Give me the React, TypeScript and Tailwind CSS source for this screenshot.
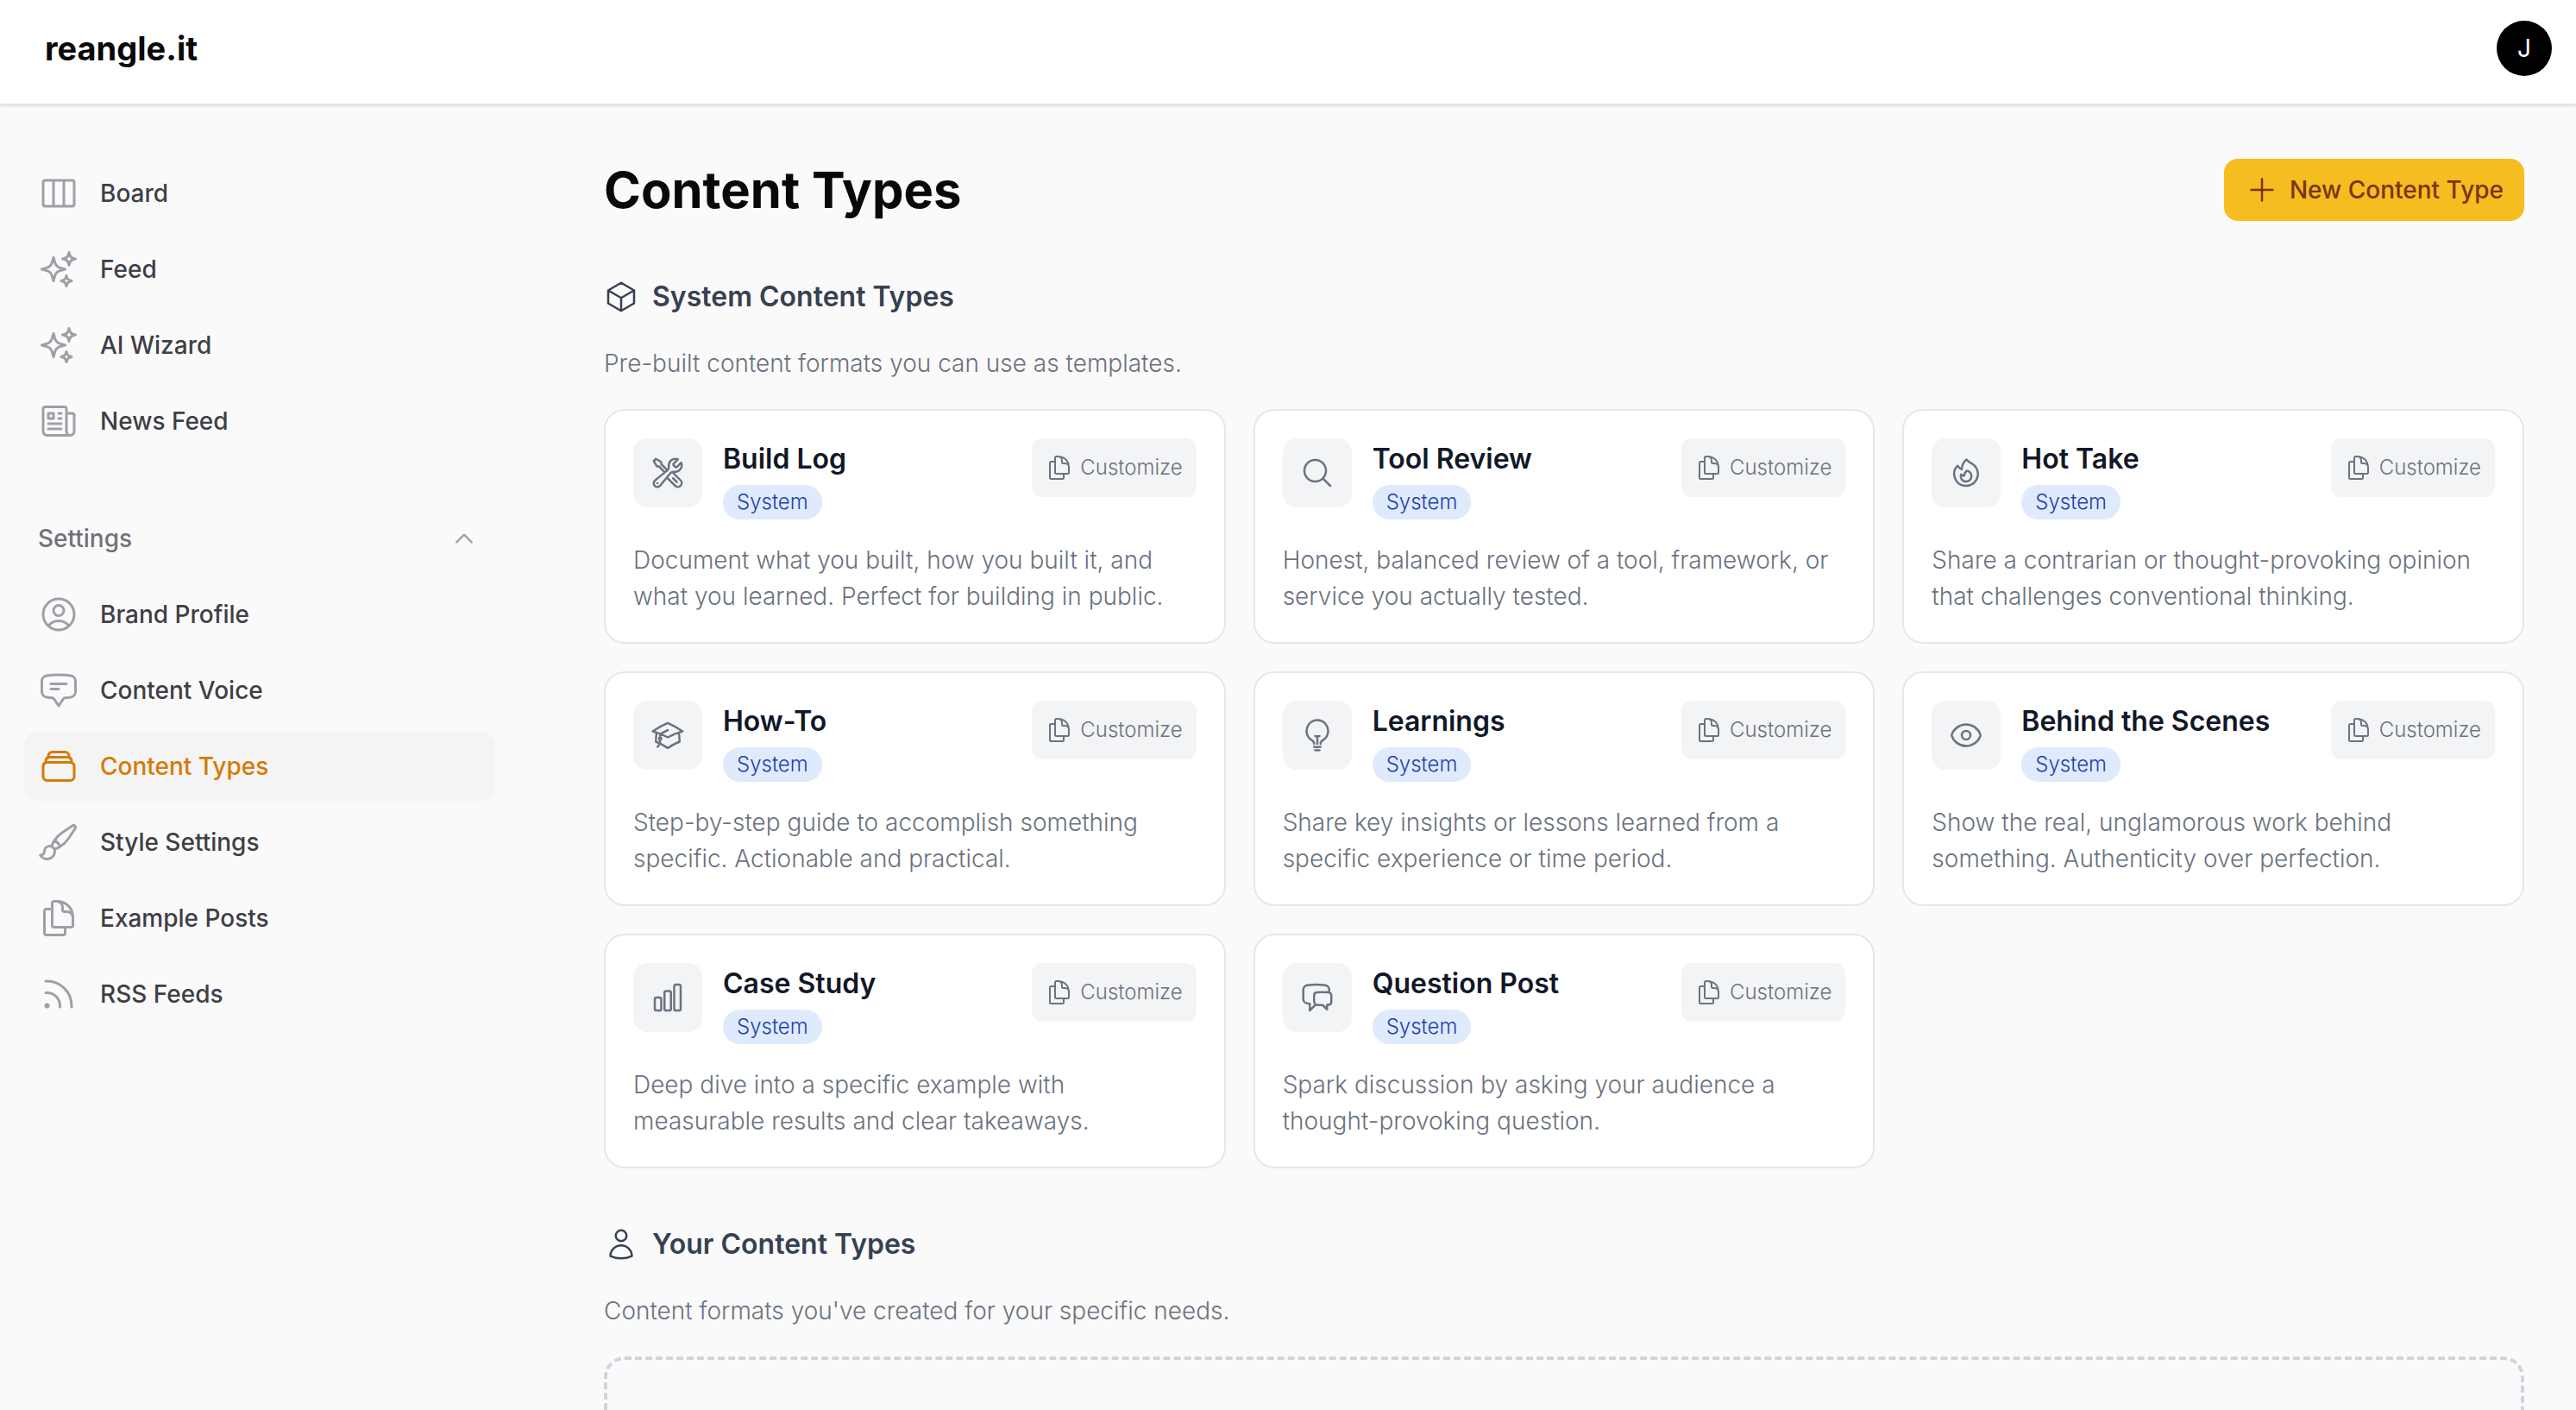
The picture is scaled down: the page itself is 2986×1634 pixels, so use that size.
import type { IconType } from 'react-icons'
import {
  HiOutlineAcademicCap,
  HiOutlineChartBar,
  HiOutlineChatBubbleBottomCenterText,
  HiOutlineChatBubbleLeftRight,
  HiOutlineChevronUp,
  HiOutlineCube,
  HiOutlineDocumentDuplicate,
  HiOutlineEye,
  HiOutlineFire,
  HiOutlineLightBulb,
  HiOutlineMagnifyingGlass,
  HiOutlineNewspaper,
  HiOutlinePaintBrush,
  HiOutlinePlus,
  HiOutlineRectangleStack,
  HiOutlineRss,
  HiOutlineSparkles,
  HiOutlineUser,
  HiOutlineUserCircle,
  HiOutlineViewColumns,
  HiOutlineWrenchScrewdriver,
} from 'react-icons/hi2'

type NavEntry = { label: string; icon: IconType; active?: boolean }
type ContentType = { title: string; icon: IconType; description: string }

const mainNav: NavEntry[] = [
  { label: 'Board', icon: HiOutlineViewColumns },
  { label: 'Feed', icon: HiOutlineSparkles },
  { label: 'AI Wizard', icon: HiOutlineSparkles },
  { label: 'News Feed', icon: HiOutlineNewspaper },
]

const settingsNav: NavEntry[] = [
  { label: 'Brand Profile', icon: HiOutlineUserCircle },
  { label: 'Content Voice', icon: HiOutlineChatBubbleBottomCenterText },
  { label: 'Content Types', icon: HiOutlineRectangleStack, active: true },
  { label: 'Style Settings', icon: HiOutlinePaintBrush },
  { label: 'Example Posts', icon: HiOutlineDocumentDuplicate },
  { label: 'RSS Feeds', icon: HiOutlineRss },
]

const systemTypes: ContentType[] = [
  {
    title: 'Build Log',
    icon: HiOutlineWrenchScrewdriver,
    description: 'Document what you built, how you built it, and what you learned. Perfect for building in public.',
  },
  {
    title: 'Tool Review',
    icon: HiOutlineMagnifyingGlass,
    description: 'Honest, balanced review of a tool, framework, or service you actually tested.',
  },
  {
    title: 'Hot Take',
    icon: HiOutlineFire,
    description: 'Share a contrarian or thought-provoking opinion that challenges conventional thinking.',
  },
  {
    title: 'How-To',
    icon: HiOutlineAcademicCap,
    description: 'Step-by-step guide to accomplish something specific. Actionable and practical.',
  },
  {
    title: 'Learnings',
    icon: HiOutlineLightBulb,
    description: 'Share key insights or lessons learned from a specific experience or time period.',
  },
  {
    title: 'Behind the Scenes',
    icon: HiOutlineEye,
    description: 'Show the real, unglamorous work behind something. Authenticity over perfection.',
  },
  {
    title: 'Case Study',
    icon: HiOutlineChartBar,
    description: 'Deep dive into a specific example with measurable results and clear takeaways.',
  },
  {
    title: 'Question Post',
    icon: HiOutlineChatBubbleLeftRight,
    description: 'Spark discussion by asking your audience a thought-provoking question.',
  },
]

function NavLink({ label, icon: Icon, active }: NavEntry) {
  return (
    <li>
      <a
        href="#"
        aria-current={active ? 'page' : undefined}
        className={
          active
            ? 'flex h-20 items-center gap-6 rounded-2xl bg-[#f4f4f4] px-4 text-[#d67a05]'
            : 'flex h-20 items-center gap-6 rounded-2xl px-4 text-[#3f3f46]'
        }
      >
        <Icon className={active ? 'size-12 shrink-0' : 'size-12 shrink-0 text-[#9f9fa9]'} aria-hidden />
        {label}
      </a>
    </li>
  )
}

function Sidebar() {
  return (
    <aside className="w-[602px] shrink-0 px-7 pt-[62px] text-[28px] leading-[42px] font-[450]">
      <nav>
        <ul className="flex flex-col gap-2">
          {mainNav.map((item) => (
            <NavLink key={item.label} {...item} />
          ))}
        </ul>
        <button
          type="button"
          aria-expanded="true"
          className="mt-14 mb-2 flex h-20 w-full items-center justify-between pr-[22px] pl-4 text-[#71717a]"
        >
          Settings
          <HiOutlineChevronUp className="size-7 text-[#9f9fa9]" strokeWidth={2} aria-hidden />
        </button>
        <ul className="flex flex-col gap-2">
          {settingsNav.map((item) => (
            <NavLink key={item.label} {...item} />
          ))}
        </ul>
      </nav>
    </aside>
  )
}

function SectionHeading({ icon: Icon, title, subtitle }: { icon: IconType; title: string; subtitle: string }) {
  return (
    <>
      <h2 className="flex items-center gap-4 text-[32px] leading-12 font-semibold text-[#374151]">
        <Icon className="size-10" aria-hidden />
        {title}
      </h2>
      <p className="my-8 text-[28px] leading-[42px] font-light text-[#6b7280]">{subtitle}</p>
    </>
  )
}

function TypeCard({ title, icon: Icon, description }: ContentType) {
  return (
    <article className="rounded-3xl border-2 border-[#e5e7eb] bg-white p-8">
      <div className="flex items-start gap-6">
        <div className="flex size-20 shrink-0 items-center justify-center rounded-2xl bg-[#f3f4f6] text-[#6b7280]">
          <Icon className="size-10" aria-hidden />
        </div>
        <div className="flex flex-1 flex-col items-start gap-1.5">
          <h3 className="text-[32px] leading-12 font-semibold text-[#111827]">{title}</h3>
          <span className="rounded-full bg-[#dfeafc] px-4 py-1 text-2xl leading-8 font-light text-[#1e40af]">System</span>
        </div>
        <button
          type="button"
          className="flex h-[68px] items-center gap-2 rounded-xl bg-[#f3f4f6] px-4 text-2xl leading-8 font-light text-[#6b7280]"
        >
          <HiOutlineDocumentDuplicate className="size-8" aria-hidden />
          Customize
        </button>
      </div>
      <p className="mt-[26px] text-[28px] leading-[42px] font-light text-[#6b7280]">{description}</p>
    </article>
  )
}

export default function App() {
  return (
    <div className="flex h-screen flex-col overflow-hidden bg-[#fafafa] font-['Inter',sans-serif]">
      <header className="flex shrink-0 items-center justify-between border-b-2 border-[#e5e5e5] bg-white pt-6 pr-7 pb-8 pl-[52px] shadow-sm">
        <a href="#" className="text-[38px] leading-12 font-bold text-[#09090b]">
          reangle.it
        </a>
        <button
          type="button"
          aria-label="Account"
          className="flex size-16 items-center justify-center rounded-full bg-black text-[28px] leading-8 font-normal text-white"
        >
          J
        </button>
      </header>
      <div className="flex min-h-0 flex-1">
        <Sidebar />
        <main className="min-w-0 flex-1 overflow-hidden pt-[62px] pr-[60px] pl-[98px]">
          <div className="flex items-center justify-between">
            <h1 className="text-[58px] leading-[72px] font-bold text-[#09090b]">Content Types</h1>
            <button
              type="button"
              className="flex h-[72px] items-center gap-3 rounded-2xl bg-[#f5bd1f] px-6 text-[28px] leading-10 font-[450] text-[#78350f]"
            >
              <HiOutlinePlus className="size-10" aria-hidden />
              New Content Type
            </button>
          </div>

          <section className="mt-16">
            <SectionHeading
              icon={HiOutlineCube}
              title="System Content Types"
              subtitle="Pre-built content formats you can use as templates."
            />
            <div className="grid grid-cols-3 gap-8">
              {systemTypes.map((type) => (
                <TypeCard key={type.title} {...type} />
              ))}
            </div>
          </section>

          <section className="mt-16">
            <SectionHeading
              icon={HiOutlineUser}
              title="Your Content Types"
              subtitle="Content formats you've created for your specific needs."
            />
            <div className="h-96 rounded-3xl border-4 border-dashed border-[#d1d5db] bg-[#f9fafc]" />
          </section>
        </main>
      </div>
    </div>
  )
}
